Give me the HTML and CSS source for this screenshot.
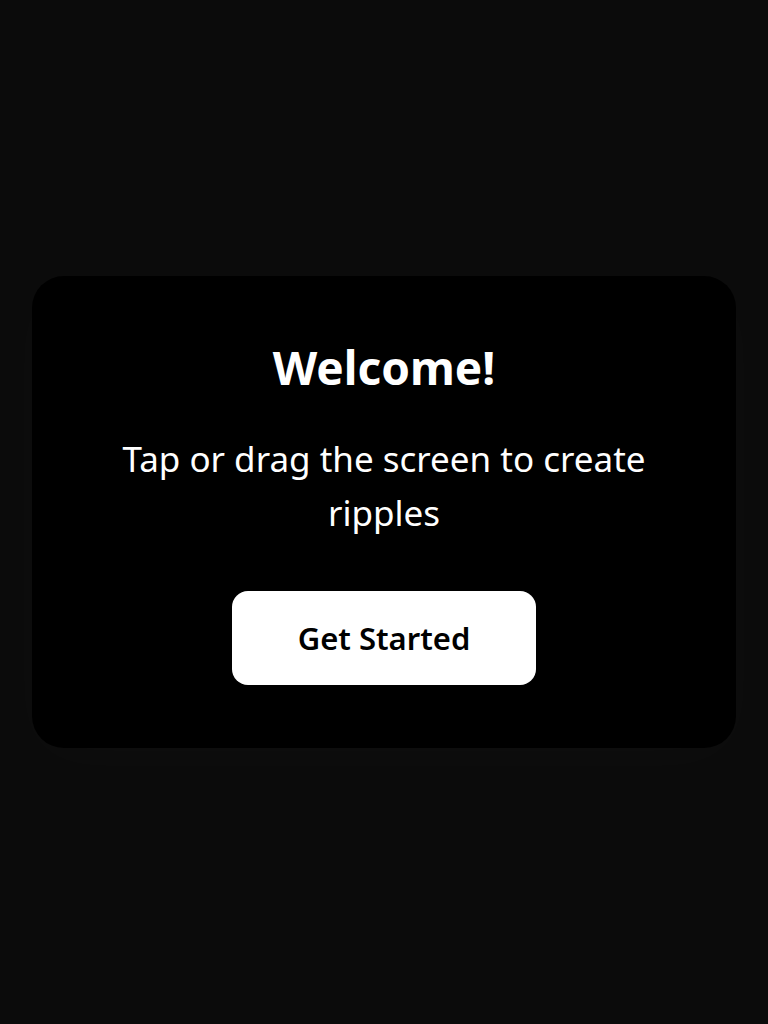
FILE: index.html
```html
<!DOCTYPE html>
<html lang="en">
<head>
<meta charset="utf-8">
<title>Welcome</title>
<link rel="stylesheet" href="styles.css">
</head>
<body>
<main class="screen">
  <section class="card">
    <h1 class="title">Welcome!</h1>
    <p class="text">Tap or drag the screen to create ripples</p>
    <button class="btn">Get Started</button>
  </section>
</main>
</body>
</html>
```
FILE: styles.css
```css
* { box-sizing: border-box; }
html, body { margin: 0; height: 100%; }
body {
  background: #0b0b0b;
  font-family: "Noto Sans", "Open Sans", sans-serif;
  color: #fff;
}
.screen {
  min-height: 100vh;
  display: flex;
  align-items: center;
  justify-content: center;
  padding: 0 32px;
}
.card {
  width: 100%;
  background: #000;
  border-radius: 32px;
  padding: 64px 64px 63px;
  display: flex;
  flex-direction: column;
  align-items: center;
  text-align: center;
  box-shadow: 0 10px 60px rgba(255,255,255,0.02);
}
.title {
  margin: 0;
  font-size: 46px;
  font-weight: 700;
  line-height: 1.2;
}
.text {
  margin: 37px 0 0;
  font-size: 35px;
  line-height: 54px;
  font-weight: 400;
}
.btn {
  margin-top: 51px;
  background: #fff;
  color: #000;
  border: 0;
  border-radius: 16px;
  padding: 0 66px;
  height: 94px;
  font-family: inherit;
  font-size: 31px;
  font-weight: 600;
}
```
